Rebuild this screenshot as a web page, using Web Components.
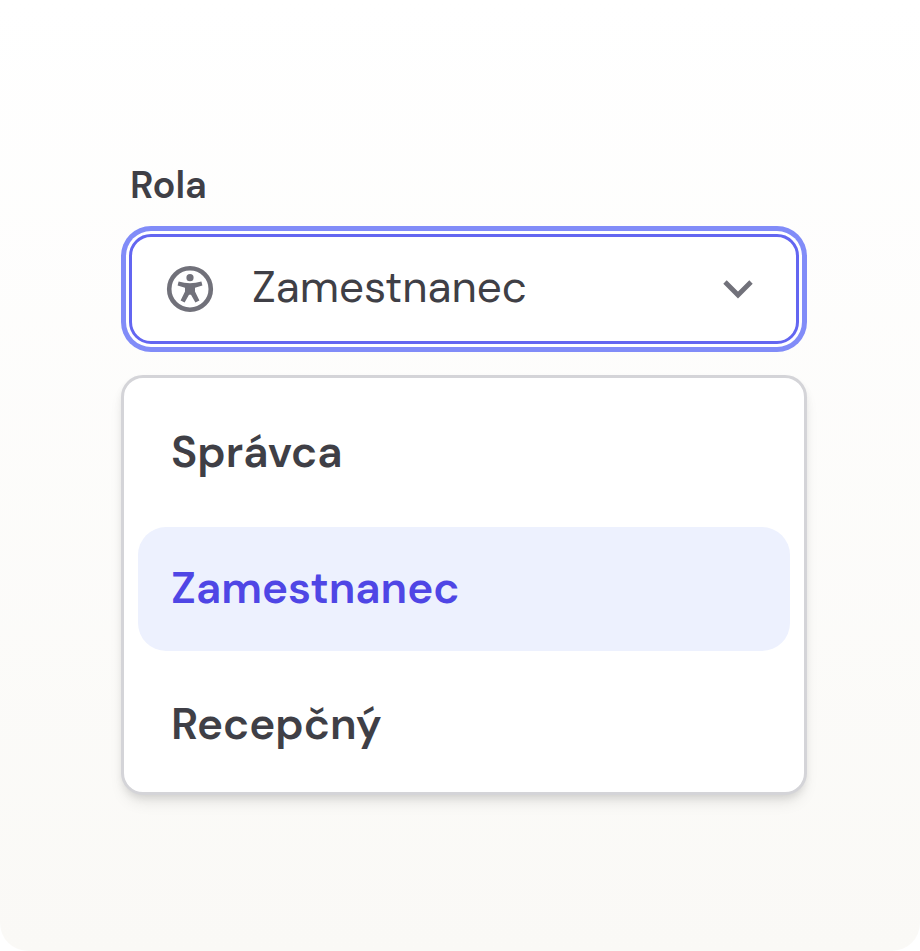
<!DOCTYPE html>
<html lang="sk">
<head>
<meta charset="utf-8">
<meta name="viewport" content="width=device-width, initial-scale=1">
<title>Rola</title>
<style>
  body {
    margin: 0;
    background: #fff;
    font-family: "DM Sans", Inter, "Liberation Sans", sans-serif;
    color: #3f3f46;
  }
</style>
</head>
<body>

<page-panel>
  <select-field label="Rola" value="employee">
    <select-option value="admin">Správca</select-option>
    <select-option value="employee">Zamestnanec</select-option>
    <select-option value="reception">Recepčný</select-option>
  </select-field>
</page-panel>

<script>
const panelTemplate = document.createElement('template')

panelTemplate.innerHTML = `
<style>
  :host {
    display: block;
    box-sizing: border-box;
    min-height: 100vh;
    padding: 160px 113px 120px 121px;
    border-radius: 0 0 28px 28px;
    background: linear-gradient(#ffffff, #faf9f6);
  }
</style>
<slot></slot>
`

class PagePanel extends HTMLElement {
  constructor () {
    super()
    this.attachShadow({ mode: 'open' })
    this.shadowRoot.appendChild(panelTemplate.content.cloneNode(true))
  }
}

/*
  one row of the list
  attributes: value, selected
  events: option-pick
*/
const optionTemplate = document.createElement('template')

optionTemplate.innerHTML = `
<style>
  :host {
    display: block;
  }

  button {
    display: block;
    width: 100%;
    padding: 31px 33px 33px;
    border: 0;
    border-radius: 28px;
    background: transparent;
    color: inherit;
    font: inherit;
    font-size: 44px;
    font-weight: 600;
    line-height: 60px;
    text-align: left;
    cursor: pointer;
  }

  button:hover {
    background: #f4f4f5;
  }

  :host([selected]) button {
    background: #edf1fe;
    color: #4f46e5;
  }
</style>
<button type="button" role="option"><slot></slot></button>
`

class SelectOption extends HTMLElement {
  static get observedAttributes () {
    return ['selected']
  }

  constructor () {
    super()
    this.attachShadow({ mode: 'open' })
    this.shadowRoot.appendChild(optionTemplate.content.cloneNode(true))
    this.button = this.shadowRoot.querySelector('button')
    this.button.addEventListener('click', () => {
      this.dispatchEvent(new CustomEvent('option-pick', {
        bubbles: true,
        detail: this.getAttribute('value')
      }))
    })
  }

  attributeChangedCallback () {
    this.button.setAttribute('aria-selected', this.hasAttribute('selected'))
  }
}

/*
  label, select and its open list
  attributes: label, value
*/
const fieldTemplate = document.createElement('template')

fieldTemplate.innerHTML = `
<style>
  :host {
    display: block;
  }

  label {
    display: block;
    margin: 0 9px 24px;
    font-size: 38px;
    font-weight: 600;
    line-height: 50px;
  }

  .control {
    display: grid;
    grid-template-columns: auto 1fr auto;
    align-items: center;
    margin: 0 8px;
    border: 3px solid #6366f1;
    border-radius: 22px;
    background: #fff;
    box-shadow: 0 0 0 3px #fff, 0 0 0 8px #818cf8;
  }

  /* the select fills the whole row, the icons share it */
  select {
    grid-area: 1 / 1 / 2 / 4;
    width: 100%;
    height: 104px;
    padding: 0 80px 4px 120px;
    border: 0;
    border-radius: 20px;
    outline: 0;
    appearance: none;
    background: transparent;
    color: inherit;
    font: inherit;
    font-size: 44px;
    cursor: pointer;
  }

  svg {
    grid-row: 1;
    color: #71717a;
    pointer-events: none;
  }

  .person {
    grid-column: 1;
    margin-left: 34px;
  }

  .chevron {
    grid-column: 3;
    margin-right: 40px;
  }

  .list {
    display: grid;
    gap: 12px;
    margin-top: 31px;
    padding: 13px 14px 5px;
    border: 3px solid #d4d4d8;
    border-radius: 22px;
    background: #fff;
    box-shadow: 0 10px 16px -4px rgba(0, 0, 0, .1), 0 4px 8px -2px rgba(0, 0, 0, .1);
  }

  .list[hidden] {
    display: none;
  }
</style>

<label for="field"></label>
<div class="control">
  <select id="field"></select>
  <svg class="person" width="48" height="48" viewBox="0 0 48 48" aria-hidden="true">
    <circle cx="24" cy="24" r="20.8" fill="none" stroke="currentColor" stroke-width="4.6"/>
    <circle cx="24" cy="12.7" r="3.6" fill="currentColor"/>
    <path d="M12.6 16.6Q24 19.8 35.4 16.6L36.4 20.6L29 22.8V26.5L33.4 35.6L29.4 37.6L25 29.8H23L18.6 37.6L14.6 35.6L19 26.5V22.8L11.6 20.6Z" fill="currentColor"/>
  </svg>
  <svg class="chevron" width="36" height="36" viewBox="0 0 36 36" aria-hidden="true">
    <path d="M5 11L18 24L31 11" fill="none" stroke="currentColor" stroke-width="4.8"/>
  </svg>
</div>
<div class="list" role="listbox"><slot></slot></div>
`

class SelectField extends HTMLElement {
  constructor () {
    super()
    this.attachShadow({ mode: 'open' })
  }

  connectedCallback () {
    this.shadowRoot.appendChild(fieldTemplate.content.cloneNode(true))

    const label = this.getAttribute('label') ?? ''
    this.select = this.shadowRoot.querySelector('select')
    this.list = this.shadowRoot.querySelector('.list')
    this.options = [...this.querySelectorAll('select-option')]

    this.shadowRoot.querySelector('label').textContent = label
    this.list.setAttribute('aria-label', label)

    this.options.forEach(option => {
      this.select.add(new Option(option.textContent, option.getAttribute('value')))
    })

    this.pick(this.getAttribute('value'))

    // our own list opens in place of the native one
    this.select.addEventListener('mousedown', (event) => {
      event.preventDefault()
      this.select.focus()
      this.list.hidden = !this.list.hidden
    })
    this.select.addEventListener('change', () => this.pick(this.select.value))
    this.addEventListener('option-pick', (event) => {
      this.pick(event.detail)
      this.list.hidden = true
    })
  }

  pick (value) {
    this.select.value = value
    this.options.forEach(option => {
      option.toggleAttribute('selected', option.getAttribute('value') === value)
    })
  }
}

window.customElements.define('page-panel', PagePanel)
window.customElements.define('select-option', SelectOption)
window.customElements.define('select-field', SelectField)
</script>
</body>
</html>
